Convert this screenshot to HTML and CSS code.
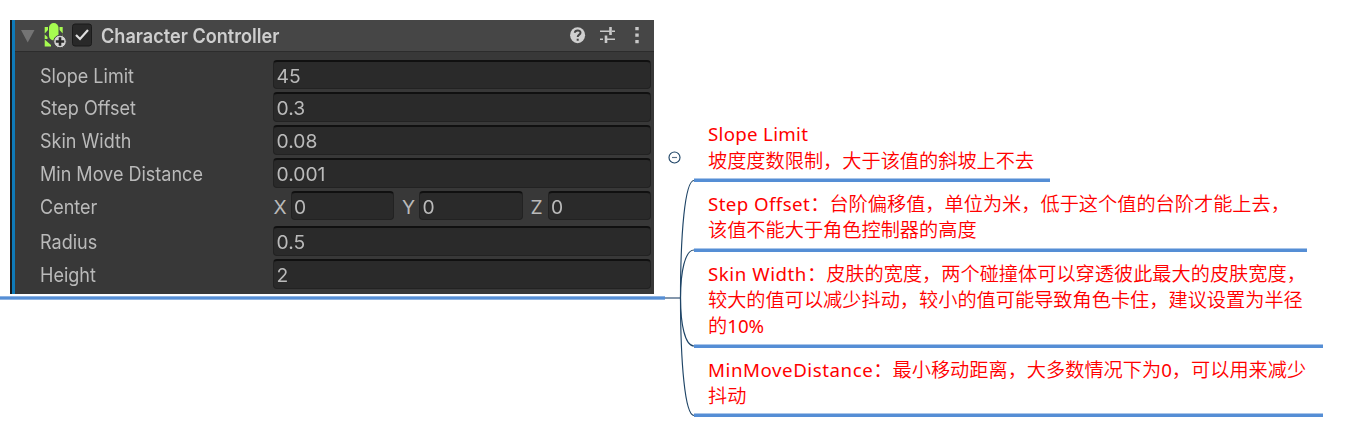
FILE: index.html
```html
<!DOCTYPE html>
<html lang="zh-CN">
<head>
<meta charset="utf-8">
<title>Character Controller</title>
<link rel="stylesheet" href="styles.css">
</head>
<body>
<main class="map">
  <section class="topic">
    <div class="inspector">
      <header class="head">
        <svg class="head-icons" width="80" height="31" viewBox="0 0 80 31">
          <path d="M6 10H19.500L12.700 22.500Z" fill="#747474"/>
          <g fill="#a6fb50">
            <rect x="34" y="3" width="9.500" height="17.500" rx="4.700"/>
            <path d="M29.700 7H33V10L29.700 13.500ZM44.500 7H47.700V13.500L44.500 10ZM29.700 14.500L32.500 17V19H29.700ZM47.700 14.500L45 17H47.700ZM29.700 19.500L36 25V26.500H29.700Z"/>
          </g>
          <circle cx="45" cy="21.500" r="6.300" fill="#d2d2d2" stroke="#444"/>
          <path d="M45 17.300V25.700M40.800 21.500H49.200" stroke="#292929" stroke-width="2.600"/>
          <rect x="57.500" y="4" width="19" height="22" rx="2.500" fill="#292929" stroke="#1b1b1b"/>
          <path d="M61 15L65 19L73 10" fill="none" stroke="#dfdfdf" stroke-width="2.200"/>
        </svg>
        <h1 class="title">Character Controller</h1>
        <svg class="tools" width="88" height="31" viewBox="0 0 88 31">
          <ellipse cx="11.600" cy="15.200" rx="7.500" ry="8" fill="#cfcfcf"/>
          <path d="M8.800 12.800C9 9.600 14.500 9.600 14.500 12.700C14.500 14.800 11.800 14.500 11.700 17M11.700 18.700V20.800" fill="none" stroke="#444" stroke-width="2"/>
          <path d="M34 11.200H44M46 11.200H49M34 19.200H37M40 19.200H49" stroke="#c8c8c8" stroke-width="1.600"/>
          <path d="M44.500 7V15M40 15.500V23" stroke="#c8c8c8" stroke-width="2.600"/>
          <path d="M69.300 7H72.700V10.300H69.300ZM69.300 13.500H72.700V16.800H69.300ZM69.300 20H72.700V23.300H69.300Z" fill="#c8c8c8"/>
        </svg>
      </header>
      <div class="rows">
        <div class="row"><span class="label">Slope Limit</span><span class="field">45</span></div>
        <div class="row"><span class="label">Step Offset</span><span class="field">0.3</span></div>
        <div class="row"><span class="label">Skin Width</span><span class="field">0.08</span></div>
        <div class="row"><span class="label">Min Move Distance</span><span class="field">0.001</span></div>
        <div class="row center"><span class="label">Center</span><span class="axis">X</span><span class="field">0</span><span class="axis">Y</span><span class="field">0</span><span class="axis">Z</span><span class="field">0</span></div>
        <div class="row"><span class="label">Radius</span><span class="field">0.5</span></div>
        <div class="row"><span class="label">Height</span><span class="field">2</span></div>
      </div>
    </div>
    <div class="rule"></div>
  </section>
  <svg class="links" width="29" height="424" viewBox="0 0 29 424" fill="none">
    <path d="M0 298H15.500" stroke="#8497ac" stroke-width="2"/>
    <g stroke="#1f4567" stroke-width="1.150">
      <path d="M15.500 298C15.500 233 20 180.500 29 180.500"/>
      <path d="M15.500 298C15.500 272 20 250 29 250"/>
      <path d="M15.500 298C15.500 324 20 346 29 346"/>
      <path d="M15.500 298C15.500 363 20 415.500 29 415.500"/>
      <circle cx="9.500" cy="157.500" r="5.500"/>
      <path d="M7 157.500H12" stroke="#5b7289"/>
    </g>
  </svg>
  <section class="notes">
    <div class="note n1"><p><span class="en e1">Slope Limit</span></p><p>坡度度数限制，大于该值的斜坡上不去</p></div>
    <div class="note n2"><p><span class="en e2">Step Offset</span>：台阶偏移值，单位为米，低于这个值的台阶才能上去，</p><p>该值不能大于角色控制器的高度</p></div>
    <div class="note n3"><p><span class="en e3">Skin Width</span>：皮肤的宽度，两个碰撞体可以穿透彼此最大的皮肤宽度，</p><p>较大的值可以减少抖动，较小的值可能导致角色卡住，建议设置为半径</p><p>的<span class="en">10%</span></p></div>
    <div class="note n4"><p><span class="en e4">MinMoveDistance</span>：最小移动距离，大多数情况下为<span class="en">0</span>，可以用来减少</p><p>抖动</p></div>
  </section>
</main>
</body>
</html>
```
FILE: styles.css
```css
* { box-sizing: border-box; }
body { margin: 0; background: #fff; overflow: hidden; }
.map { display: flex; width: 1365px; height: 424px; }
.topic { width: 665px; padding-top: 20px; }
.inspector {
  width: 644px; height: 274px; margin-left: 10px;
  background: #383838; border-left: 2px solid #17191b;
  box-shadow: inset 3px 0 #0f7ab8;
  font-family: Inter, "Liberation Sans", sans-serif;
  font-size: 19.300px; color: #bababa;
}
.head {
  display: flex; height: 32px; margin-left: 3px;
  background: #464646; border-bottom: 1px solid #2c2c2c;
}
.title {
  flex: 1; margin: 0 0 0 6px; font-size: 19.500px; font-weight: 600;
  line-height: 33px; color: #cecece; white-space: nowrap;
  transform: scaleX(.928); transform-origin: 0 0;
}
.head-icons, .tools, .label, .field, .title { filter: blur(.35px); }
.rows { display: flex; flex-direction: column; gap: 3px; padding: 7.500px 3px 0 28px; }
.row { display: flex; height: 29.800px; line-height: 33px; white-space: nowrap; }
.label { width: 232.500px; font-size: 19.600px; transform: scaleX(.92); transform-origin: 0 0; }
.axis { width: 18px; padding-left: 1px; }
.field {
  flex: 1; padding-left: 3px; background: #2a2a2a;
  border: 1px solid #222; border-top: 2px solid #101010; border-radius: 4px;
  line-height: 29px;
}
.center { margin-bottom: 3px; }
.center .field { padding-left: 2.500px; }
.center .field + .axis { width: 25px; padding-left: 8px; }
.rule { height: 4px; margin-top: 2px; background: #558ed5; border: solid #8db3e2; border-width: 1px 0; }
.notes {
  display: flex; flex-direction: column; width: 629px;
  font-family: "Noto Sans CJK SC", sans-serif; font-weight: 350;
  font-size: 19.200px; color: #f00; padding-top: 120px;
}
.note {
  padding-left: 14px; border-bottom: 3px solid #558ed5;
  box-shadow: inset 0 -1px #a9c5e9; white-space: nowrap;
}
.note p { margin: 0; height: 26.300px; line-height: 26.300px; }
.en { font-family: "Noto Sans", sans-serif; font-weight: 400; font-size: 18.700px; }
.e1 { letter-spacing: .3px; }
.e2 { letter-spacing: .42px; }
.e3 { letter-spacing: .55px; }
.e4 { letter-spacing: .56px; }
.n1 { width: 356px; height: 62px; }
.n1 p + p { padding-top: .700px; }
.n2 { width: 613px; height: 69.500px; padding-top: 8px; }
.n3 { height: 96px; padding-top: 8px; }
.n4 { height: 69.500px; padding-top: 8px; }
```
